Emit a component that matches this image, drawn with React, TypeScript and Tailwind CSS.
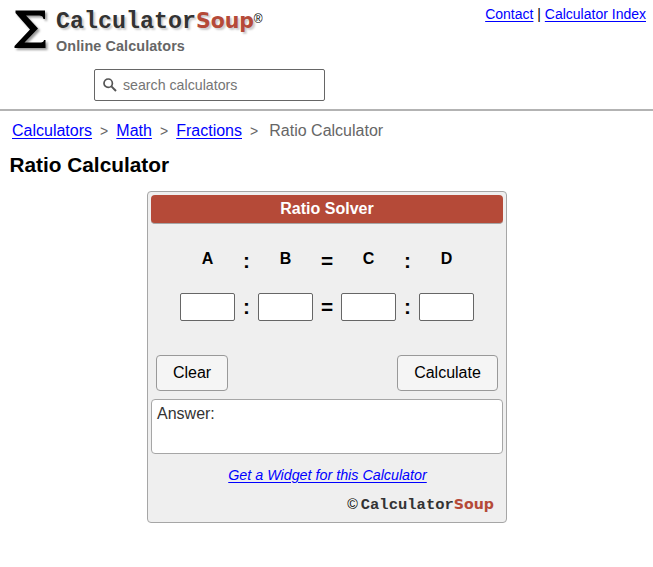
export default function App() {
  const crumbs = ["Calculators", "Math", "Fractions"];
  const fields = [
    { label: "A", sep: "" },
    { label: "B", sep: ":" },
    { label: "C", sep: "=" },
    { label: "D", sep: ":" }
  ];
  const sepWidth = (sep: string) => (sep === "=" ? "w-[28px]" : "w-[23px]");

  return (
    <div className="h-[567px] overflow-hidden bg-white font-['Liberation_Sans',Arial,sans-serif] text-base text-black">
      <header className="h-[111px] border-b-2 border-[#b3b3b3]">
        <div className="flex h-[69px] justify-between pl-[13px] pr-[7px]">
          <div className="flex">
            <svg className="mt-[9px] h-[45px] w-[39px] [filter:drop-shadow(2px_2px_1px_#999)]" viewBox="0 0 39 45">
              <path d="M2.5 1.5H32V10H30.5C30 7.5 29 6.5 25 6.5H13L25 19.5L11.5 33.5H26C29.5 33.5 30.5 33 31 31H32.5V39H1.5V37L17 20.5L2.5 4Z" />
            </svg>
            <div className="ml-1">
              <div className="mt-[8px] flex h-[27px] items-baseline leading-[27px]">
                <span className="w-[140px] font-['Liberation_Mono',monospace] text-[23.33px] font-bold text-[#333] [text-shadow:2px_2px_2px_#ccc]">Calculator</span>
                <span className="font-['DejaVu_Sans',sans-serif] text-[20.5px] font-bold tracking-[-0.1px] text-[#b54a38] [text-shadow:2px_2px_2px_#ccc]">Soup</span>
                <span className="relative -top-[5px] text-[12px]">®</span>
              </div>
              <div className="mt-[2px] text-[14.4px] leading-[18px] font-bold tracking-[0.1px] text-[#666]">Online Calculators</div>
            </div>
          </div>
          <nav className="mt-[5px] text-[14px] leading-[18px]">
            <a href="#" className="text-[#00f] underline underline-offset-2">Contact</a> | <a href="#" className="text-[#00f] underline underline-offset-2">Calculator Index</a>
          </nav>
        </div>
        <div className="ml-[94px] flex h-[32px] w-[231px] items-center rounded-[2px] border border-[#666] pl-[8px]">
          <svg className="h-[15px] w-[15px]" viewBox="0 0 15 15" fill="none" stroke="#555" strokeWidth="1.7">
            <circle cx="5.2" cy="5.2" r="4.2" />
            <path d="M8.4 8.4L13 13" strokeWidth="2" />
          </svg>
          <input placeholder="search calculators" className="mt-px ml-[5px] w-[180px] text-[14.2px] outline-none placeholder:text-[#757575]" />
        </div>
      </header>

      <nav className="mt-[10px] flex h-[20px] items-center pl-[12px] leading-[20px] text-[#666]">
        {crumbs.map((crumb) => (
          <div key={crumb} className="flex items-center">
            <a href="#" className="text-[#00f] underline underline-offset-2">{crumb}</a>
            <span className="w-[24.3px] text-center text-[14px]">&gt;</span>
          </div>
        ))}
        <span className="ml-[3px]">Ratio Calculator</span>
      </nav>
      <h1 className="mt-[11px] pl-[9.5px] text-[20.8px] leading-[26px] font-bold">Ratio Calculator</h1>

      <main className="mt-[13px] ml-[147px] h-[332px] w-[360px] rounded-[4px] border border-[#a6a6a6] bg-[#efefef] p-[3px]">
        <h2 className="h-[29px] rounded-[4px] border-b border-[#a6a6a6] bg-[#b54a38] text-center leading-[27px] font-bold text-white">Ratio Solver</h2>

        <div className="mt-[24px] flex justify-center font-bold">
          {fields.map(({ label, sep }) => (
            <div key={label} className="flex h-[28px]">
              {sep && <span className={`${sepWidth(sep)} pt-px text-center text-[20.8px] leading-[24px]`}>{sep}</span>}
              <span className="w-[55px] text-center leading-[22px]">{label}</span>
            </div>
          ))}
        </div>
        <div className="mt-[17px] flex justify-center font-bold">
          {fields.map(({ label, sep }) => (
            <div key={label} className="flex h-[28px]">
              {sep && <span className={`${sepWidth(sep)} text-center text-[20.8px] leading-[28px]`}>{sep}</span>}
              <input aria-label={label} className="w-[55px] rounded-[2px] border border-[#666] bg-white" />
            </div>
          ))}
        </div>

        <div className="mt-[34px] flex justify-between px-[5px]">
          <button className="h-[36px] w-[72px] rounded-[4px] border border-[#999] bg-[#f5f5f5]">Clear</button>
          <button className="h-[36px] w-[101px] rounded-[4px] border border-[#999] bg-[#f5f5f5]">Calculate</button>
        </div>
        <div className="mt-[8px] h-[55px] rounded-[4px] border border-[#a6a6a6] bg-white px-[5px] pt-[4px] leading-[20px] text-[#333]">Answer:</div>
        <div className="mt-[12px] pl-px text-center text-[14.3px] leading-[18px]">
          <a href="#" className="text-[#00f] italic underline underline-offset-2">Get a Widget for this Calculator</a>
        </div>
        <div className="mt-[10px] flex items-baseline justify-end pr-[9px] text-[14.4px] leading-[20px]">
          <span>©</span>
          <span className="ml-[3px] w-[93px] font-['Liberation_Mono',monospace] text-[15.5px] font-bold text-[#333]">Calculator</span>
          <span className="font-['DejaVu_Sans',sans-serif] text-[14.2px] font-bold text-[#b54a38]">Soup</span>
        </div>
      </main>
    </div>
  );
}
